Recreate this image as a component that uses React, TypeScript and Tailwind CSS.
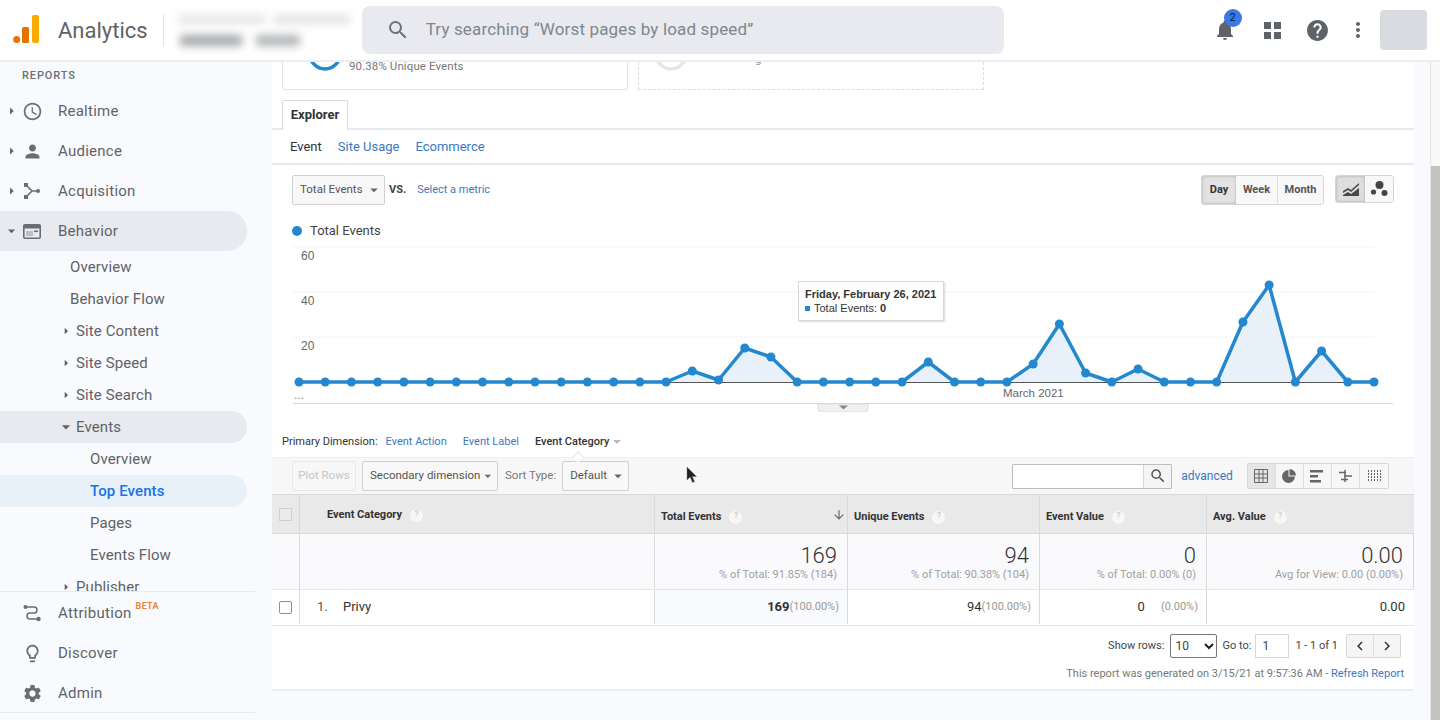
import React from "react";
import {
  MdArrowDownward,
  MdArrowDropDown,
  MdArrowRight,
  MdChevronLeft,
  MdChevronRight,
  MdHelp,
  MdMoreVert,
  MdNotifications,
  MdOutlineAccessTime,
  MdOutlineLightbulb,
  MdPerson,
  MdSearch,
  MdSettings,
} from "react-icons/md";

const values = [
  382, 382, 382, 382, 382, 382, 382, 382, 382, 382, 382, 382, 382, 382, 382, 371, 380, 348, 357, 382, 382, 382, 382,
  382, 362, 382, 382, 382, 364, 324, 373, 382, 369, 382, 382, 382, 322, 285, 382, 351, 382, 382,
];
const points = values.map((y, i) => [299 + i * 26.22, y]);
const linePath = points.map(([x, y]) => `${x},${y}`).join(" ");

const Help = () => (
  <span className="ml-2 inline-flex h-[13px] w-[13px] items-center justify-center rounded-full bg-[#f7f7f7] text-[9px] font-normal text-[#c4c4c4]">
    ?
  </span>
);

const Nav = ({ icon, label, open, active }: { icon: React.ReactNode; label: string; open?: boolean; active?: boolean }) => (
  <div className={`flex h-10 w-[247px] items-center rounded-r-[20px] pl-[3px] ${active ? "bg-[#e9eaef]" : ""}`}>
    <span className="flex w-[17px] justify-center text-[#5f6368]">
      {open ? <MdArrowDropDown size={20} /> : <MdArrowRight size={18} />}
    </span>
    <span className="flex w-6 justify-center text-[#6a6d71]">{icon}</span>
    <span className="ml-[14px] text-[15px] tracking-[0.25px] text-[#5f6368]">{label}</span>
  </div>
);

const Sub = ({ label, indent, arrow, open, pill }: { label: string; indent: string; arrow?: boolean; open?: boolean; pill?: string }) => (
  <div className={`flex h-8 w-[247px] items-center rounded-r-[16px] ${indent} ${pill ?? ""}`}>
    {arrow && (
      <span className="-ml-5 flex w-5 justify-center text-[#5f6368]">
        {open ? <MdArrowDropDown size={20} /> : <MdArrowRight size={16} />}
      </span>
    )}
    <span className={`text-[15px] tracking-[0.1px] ${pill === "bg-[#e8f1f7]" ? "font-medium text-[#1a73e8]" : "text-[#5f6368]"}`}>{label}</span>
  </div>
);

const Sidebar = () => (
  <aside className="flex h-[658px] w-[272px] shrink-0 flex-col bg-[#f9fafd]">
    <div className="flex-1 overflow-hidden">
      <div className="flex h-[29px] items-center pl-[22px] text-[11px] font-medium tracking-[0.9px] text-[#6b6e72]">REPORTS</div>
      <Nav label="Realtime" icon={<MdOutlineAccessTime size={21} />} />
      <Nav label="Audience" icon={<MdPerson size={21} />} />
      <Nav
        label="Acquisition"
        icon={
          <svg width="18" height="18" viewBox="0 0 18 18" fill="none" stroke="currentColor" strokeWidth="1.6">
            <path d="M3 3l6 6-6 6M9 9h6" />
            <rect x="1" y="1" width="4" height="4" fill="currentColor" stroke="none" />
            <rect x="1" y="13" width="4" height="4" fill="currentColor" stroke="none" />
            <circle cx="15" cy="9" r="2" fill="currentColor" stroke="none" />
          </svg>
        }
      />
      <Nav
        label="Behavior"
        open
        active
        icon={
          <svg width="18" height="15" viewBox="0 0 18 15" fill="none">
            <rect x="0.8" y="0.8" width="16.4" height="13.4" rx="1" stroke="currentColor" strokeWidth="1.6" />
            <rect x="1" y="1" width="16" height="3.5" fill="currentColor" />
            <rect x="3" y="7" width="7" height="5" fill="currentColor" opacity="0.35" />
            <rect x="11" y="6.5" width="4" height="1.6" fill="currentColor" />
          </svg>
        }
      />
      <Sub label="Overview" indent="pl-[70px]" />
      <Sub label="Behavior Flow" indent="pl-[70px]" />
      <Sub label="Site Content" indent="pl-[76px]" arrow />
      <Sub label="Site Speed" indent="pl-[76px]" arrow />
      <Sub label="Site Search" indent="pl-[76px]" arrow />
      <Sub label="Events" indent="pl-[76px]" arrow open pill="bg-[#e9eaef]" />
      <Sub label="Overview" indent="pl-[90px]" />
      <Sub label="Top Events" indent="pl-[90px]" pill="bg-[#e8f1f7]" />
      <Sub label="Pages" indent="pl-[90px]" />
      <Sub label="Events Flow" indent="pl-[90px]" />
      <Sub label="Publisher" indent="pl-[76px]" arrow />
    </div>
    <div className="h-[122px] w-[255px] border-y border-[#e9eaee] pt-px">
      <div className="flex h-10 items-center pl-5 text-[#6a6d71]">
        <span className="flex w-6 justify-center">
          <svg width="18" height="18" viewBox="0 0 18 18" fill="none" stroke="currentColor" strokeWidth="1.5">
            <circle cx="2.5" cy="3" r="2" fill="currentColor" stroke="none" />
            <circle cx="15.500" cy="15" r="2.200" fill="currentColor" stroke="none" />
            <path d="M4 3h7a3 3 0 0 1 0 6H7a3 3 0 0 0 0 6h7" />
          </svg>
        </span>
        <span className="ml-[14px] text-[15px] tracking-[0.3px] text-[#5f6368]">Attribution</span>
        <span className="-mt-3 ml-1 text-[9px] font-bold tracking-[0.3px] text-[#e8873a]">BETA</span>
      </div>
      <div className="flex h-10 items-center pl-5 text-[#6a6d71]">
        <span className="flex w-6 justify-center">
          <MdOutlineLightbulb size={21} />
        </span>
        <span className="ml-[14px] text-[15px] tracking-[0.25px] text-[#5f6368]">Discover</span>
      </div>
      <div className="flex h-10 items-center pl-5 text-[#6a6d71]">
        <span className="flex w-6 justify-center">
          <MdSettings size={21} />
        </span>
        <span className="ml-[14px] text-[15px] tracking-[0.25px] text-[#5f6368]">Admin</span>
      </div>
    </div>
    <div className="h-[7px]" />
  </aside>
);

const Header = () => (
  <header className="flex h-[62px] shrink-0 items-center border-b-2 border-[#eceef1] bg-white">
    <svg className="ml-[13px] shrink-0" width="26" height="30" viewBox="0 0 26 30">
      <circle cx="3.7" cy="24.5" r="3.5" fill="#e8710a" />
      <rect x="9" y="12" width="7" height="16" rx="1.5" fill="#e37400" />
      <rect x="19" y="0" width="7" height="28" rx="2" fill="#f9ab00" />
    </svg>
    <span className="ml-[19px] text-[22px] text-[#5f6368]">Analytics</span>
    <div className="ml-[15px] h-8 w-px bg-[#e3e4e7]" />
    <div className="ml-[14px] flex h-[44px] w-[172px] shrink-0 flex-col justify-center gap-[11px] blur-[4px]">
      <div className="flex gap-2">
        <div className="h-[9px] w-[88px] bg-[#e6e6e8]" />
        <div className="h-[9px] w-[76px] bg-[#e2e2e4]" />
      </div>
      <div className="flex gap-[14px] pl-[2px]">
        <div className="h-[11px] w-[62px] bg-[#a5a7aa]" />
        <div className="h-[11px] w-[44px] bg-[#b2b4b6]" />
      </div>
    </div>
    <div className="ml-[12px] flex h-[48px] w-[642px] shrink-0 items-center rounded-lg bg-[#e8eaf0] pl-6 text-[#6f7276]">
      <MdSearch size={24} />
      <span className="ml-4 text-[17px] tracking-[0.15px] text-[#80868b]">Try searching “Worst pages by load speed”</span>
    </div>
    <div className="relative ml-[209px] w-6 text-[#5f6368]">
      <MdNotifications size={24} />
      <span className="absolute -top-[9px] left-[11px] flex h-[18px] w-[18px] items-center justify-center rounded-full bg-[#3b78e7] text-[11px] text-[#0d1b33]">2</span>
    </div>
    <span className="ml-[24px] flex w-6 justify-center text-[#5f6368]">
      <svg width="17" height="17" viewBox="0 0 17 17" fill="currentColor">
        <rect width="7" height="7" />
        <rect x="10" width="7" height="7" />
        <rect y="10" width="7" height="7" />
        <rect x="10" y="10" width="7" height="7" />
      </svg>
    </span>
    <span className="ml-[20px] text-[#5f6368]">
      <MdHelp size={25} />
    </span>
    <span className="ml-[16px] text-[#5f6368]">
      <MdMoreVert size={24} />
    </span>
    <div className="ml-[10px] h-10 w-[47px] rounded bg-[#d8dbe0]" />
  </header>
);

const Select = ({ label, className }: { label: string; className: string }) => (
  <div className={`flex items-center justify-between whitespace-nowrap rounded-[2px] border border-[#d0d0d0] bg-[#f8f8f8] pr-px pl-[7px] text-[11.5px] text-[#555] ${className}`}>
    {label}
    <MdArrowDropDown size={18} className="text-[#666]" />
  </div>
);

const Chart = () => (
  <div className="relative h-[172px] font-['Liberation_Sans',sans-serif]">
    <svg width="1142" height="172" viewBox="272 240 1142 172" className="block">
      {[247, 292, 337].map((y) => (
        <line key={y} x1="292" x2="1374" y1={y} y2={y} stroke="#f3f4f6" />
      ))}
      <text x="301" y="260" fontSize="12" fill="#666">60</text>
      <text x="301" y="305" fontSize="12" fill="#666">40</text>
      <text x="301" y="350" fontSize="12" fill="#666">20</text>
      <text x="294" y="399" fontSize="12" fill="#888">...</text>
      <text x="1003" y="397" fontSize="11.5" fill="#666">March 2021</text>
      <polygon points={`299,382 ${linePath} 1374,382`} fill="#e8f1fa" />
      <line x1="299" x2="1374" y1="382.5" y2="382.5" stroke="#555" />
      <line x1="293" x2="1393" y1="403.5" y2="403.5" stroke="#d8d8d8" />
      <polyline points={linePath} fill="none" stroke="#2388cf" strokeWidth="3.5" strokeLinejoin="round" />
      {points.map(([x, y]) => (
        <circle key={x} cx={x} cy={y} r="4.5" fill="#2388cf" />
      ))}
      <path d="M818 404h50v5a3 3 0 0 1-3 3h-44a3 3 0 0 1-3-3z" fill="#f0f0f0" stroke="#dddddd" />
      <path d="M839 405.500h9l-4.500 4z" fill="#888" />
    </svg>
    <div className="absolute top-[41px] left-[526px] h-[40px] w-[146px] border border-[#d8d8d8] bg-white px-[6px] pt-[5px] text-[11px] leading-[14px] text-[#333] shadow-[1px_1px_2px_rgba(0,0,0,0.15)]">
      <div className="font-bold">Friday, February 26, 2021</div>
      <div className="flex items-center">
        <span className="mr-[4px] h-[5px] w-[5px] bg-[#2388cf]" />
        Total Events:&nbsp;<b>0</b>
      </div>
    </div>
  </div>
);

const tableGrid = "grid grid-cols-[28px_355px_193px_192px_167px_207px]";
const cellLine = "border-r border-[#d9d9d9]";

const Th = ({ label, sort }: { label: string; sort?: boolean }) => (
  <div className={`flex items-center pt-[6px] pl-[6px] text-[11px] font-bold text-[#333] ${cellLine} last:border-r-0`}>
    {label}
    <Help />
    {sort && <MdArrowDownward size={14} className="mr-[1px] -mt-1 ml-auto text-[#666]" />}
  </div>
);

const Total = ({ value, note }: { value: string; note: string }) => (
  <div className={`bg-[#fafafc] pt-[10px] pr-[10px] text-right ${cellLine}`}>
    <div className="text-[22px] leading-[24px] font-light text-[#333]">{value}</div>
    <div className="text-[11px] leading-[13px] text-[#a0a0a0]">{note}</div>
  </div>
);

const Main = () => (
  <main className="flex w-[1142px] shrink-0 flex-col bg-[#f9fafd] font-['Roboto',sans-serif]">
    <div className="flex h-[629px] flex-col border-b-2 border-[#eceef1] bg-white">
      <div className="flex h-7 shrink-0 gap-[10px] pl-[10px]">
        <div className="flex w-[346px] overflow-hidden rounded-b-[3px] border-x border-b border-[#e4e4e4]">
          <svg className="-mt-[10px] ml-[25px] shrink-0" width="34" height="26" viewBox="0 0 34 26">
            <path d="M2 2a15 15 0 0 0 30 0" fill="none" stroke="#2388cf" strokeWidth="3.5" />
          </svg>
          <span className="mt-[-4px] ml-[7px] text-[11.5px] tracking-[0.1px] text-[#777]">90.38% Unique Events</span>
        </div>
        <div className="flex w-[346px] overflow-hidden border-x border-b border-dashed border-[#dddddd]">
          <svg className="-mt-[10px] ml-[15px] shrink-0" width="34" height="26" viewBox="0 0 34 26">
            <path d="M2 2a15 15 0 0 0 30 0" fill="none" stroke="#e6e6e6" strokeWidth="3.5" />
          </svg>
          <span className="-mt-[11px] ml-[67px] text-[11.5px] text-[#999]">g</span>
        </div>
      </div>
      <div className="mt-[10px] h-[30px] shrink-0 border-b-2 border-[#e8e9ec] pl-[10px]">
        <div className="flex h-[30px] w-[66px] items-center justify-center rounded-t-[2px] border-x border-t border-[#d8d8d8] bg-white pb-[2px] text-[13px] font-bold text-[#333]">Explorer</div>
      </div>
      <div className="flex h-[35px] shrink-0 items-center gap-4 border-b-2 border-[#e8e9ec] pl-[18px] text-[13px]">
        <span className="text-[#333]">Event</span>
        <span className="text-[#3b78c4]">Site Usage</span>
        <span className="text-[#3b78c4]">Ecommerce</span>
      </div>
      <div className="mt-[10px] flex h-[30px] shrink-0 items-center pl-5">
        <Select label="Total Events" className="h-[30px] w-[93px]" />
        <span className="ml-[4px] text-[11px] font-bold text-[#444]">VS.</span>
        <span className="ml-[11px] text-[11px] text-[#3b78c4]">Select a metric</span>
        <div className="ml-auto flex h-[30px] overflow-hidden rounded-[3px] border border-[#d6d6d6] text-[11px] font-bold text-[#555]">
          <span className="flex w-[34px] items-center justify-center bg-[#e2e2e2] text-[#333] shadow-[inset_0_0_3px_rgba(0,0,0,0.25)]">Day</span>
          <span className="flex w-[42px] items-center justify-center border-r border-[#dedede] bg-[#f8f8f8]">Week</span>
          <span className="flex w-[45px] items-center justify-center bg-[#f8f8f8]">Month</span>
        </div>
        <div className="mr-5 ml-[11px] flex h-[28px] self-start overflow-hidden rounded-[3px] border border-[#d6d6d6]">
          <span className="flex w-[29px] items-center justify-center bg-[#dedede] shadow-[inset_0_0_3px_rgba(0,0,0,0.25)]">
            <svg width="18" height="15" viewBox="0 0 18 15" fill="#4a4a4a">
              <path d="M1 9l5-3 3 2 8-7v2L9 10 6 8l-5 3zM1 13l5-3 3 2 8-6v8H1z" />
            </svg>
          </span>
          <span className="flex w-[28px] items-center justify-center bg-[#f8f8f8]">
            <svg width="18" height="18" viewBox="0 0 18 18" fill="#444">
              <circle cx="9.500" cy="5" r="4" />
              <circle cx="3.500" cy="12" r="2.600" />
              <circle cx="14.500" cy="13" r="3" />
            </svg>
          </span>
        </div>
      </div>
      <div className="mt-4 flex h-[19px] shrink-0 items-center pl-5 text-[13px] text-[#444]">
        <span className="mr-2 h-[10px] w-[10px] rounded-full bg-[#2388cf]" />
        Total Events
      </div>
      <Chart />
      <div className="relative h-[45px] shrink-0 pt-[21px] pl-[10px] text-[11px] leading-[18px]">
        <span className="text-[#333]">Primary Dimension:</span>
        <span className="ml-2 text-[#3b78c4]">Event Action</span>
        <span className="ml-[16px] text-[#3b78c4]">Event Label</span>
        <span className="ml-[16px] font-medium text-[#333]">Event Category</span>
        <span className="ml-1 inline-block border-x-[4px] border-t-[4px] border-x-transparent border-t-[#bbb] align-middle" />
        <span className="absolute bottom-[-4px] left-[302px] h-2 w-2 rotate-45 border-t border-l border-[#e4e4e4] bg-white" />
      </div>
      <div className="flex h-[37px] shrink-0 items-center border-t border-[#efefef] bg-[#f7f7f7] pl-5">
        <span className="flex h-[30px] w-[64px] items-center justify-center rounded-[2px] border border-[#e8e8e8] text-[11.5px] text-[#c6c6c6]">Plot Rows</span>
        <Select label="Secondary dimension" className="ml-[6px] h-[30px] w-[136px]" />
        <span className="ml-[7px] text-[11.5px] text-[#777]">Sort Type:</span>
        <Select label="Default" className="ml-[6px] h-[30px] w-[67px]" />
        <div className="ml-[383px] flex h-[25px] w-[160px] overflow-hidden rounded-[1px] border border-[#bdbdbd] bg-white">
          <span className="flex-1" />
          <span className="flex w-7 items-center justify-center border-l border-[#d8d8d8] bg-[#f5f5f5] text-[#555]">
            <MdSearch size={18} />
          </span>
        </div>
        <span className="ml-[9px] text-[12px] text-[#3b78c4]">advanced</span>
        <div className="ml-[14px] flex h-[26px] overflow-hidden rounded-[2px] border border-[#d6d6d6] text-[#666]">
          <span className="flex w-7 items-center justify-center border-r border-[#dedede] bg-[#e6e6e6]">
            <svg width="14" height="14" viewBox="0 0 14 14" fill="none" stroke="currentColor">
              <path d="M.5.5h13v13H.5zM.5 5h13M.5 9h13M5 .5v13M9 .5v13" />
            </svg>
          </span>
          <span className="flex w-7 items-center justify-center border-r border-[#dedede] bg-[#f7f7f7]">
            <svg width="14" height="14" viewBox="0 0 14 14" fill="currentColor">
              <path d="M7.500 0A6.500 6.500 0 0 1 14 6.500H7.500zM6.500 1v6.500H13A6.500 6.500 0 1 1 6.500 1z" />
            </svg>
          </span>
          <span className="flex w-7 items-center justify-center border-r border-[#dedede] bg-[#f7f7f7]">
            <svg width="14" height="14" viewBox="0 0 14 14" fill="currentColor">
              <path d="M0 1h13v2.500H0zM0 6h8v2.500H0zM0 11h11v2.500H0z" />
            </svg>
          </span>
          <span className="flex w-7 items-center justify-center border-r border-[#dedede] bg-[#f7f7f7]">
            <svg width="14" height="14" viewBox="0 0 14 14" fill="none" stroke="currentColor" strokeWidth="1.5">
              <path d="M1 3.500h7M6 7h8M3 10.500h7M7 1v12" />
            </svg>
          </span>
          <span className="flex w-7 items-center justify-center bg-[#f7f7f7]">
            <svg width="14" height="14" viewBox="0 0 14 14" fill="none" stroke="currentColor">
              <path d="M1.500 1v12M4.500 1v12M7.500 1v12M10.500 1v12M13.500 1v12" strokeDasharray="2 1" />
            </svg>
          </span>
        </div>
      </div>
      <div className={`${tableGrid} h-10 shrink-0 border-y border-[#d9d9d9] bg-[#e9e9ea]`}>
        <div className={`flex items-center justify-center ${cellLine}`}>
          <span className="h-[13px] w-[13px] border border-[#cfcfcf] bg-[#ececec]" />
        </div>
        <div className={`flex items-center pt-[2px] pl-[27px] text-[11px] font-bold text-[#333] ${cellLine}`}>
          Event Category
          <Help />
        </div>
        <Th label="Total Events" sort />
        <Th label="Unique Events" />
        <Th label="Event Value" />
        <Th label="Avg. Value" />
      </div>
      <div className={`${tableGrid} h-[56px] shrink-0 border-b border-[#e4e4e4]`}>
        <div className={`bg-[#fafafc] ${cellLine}`} />
        <div className={`bg-[#fafafc] ${cellLine}`} />
        <Total value="169" note="% of Total: 91.85% (184)" />
        <Total value="94" note="% of Total: 90.38% (104)" />
        <Total value="0" note="% of Total: 0.00% (0)" />
        <Total value="0.00" note="Avg for View: 0.00 (0.00%)" />
      </div>
      <div className={`${tableGrid} h-[36px] shrink-0 border-b border-[#e4e4e4] pb-px text-[13px] text-[#333]`}>
        <div className={`flex items-center justify-center ${cellLine}`}>
          <span className="h-[13px] w-[13px] rounded-[2px] border border-[#8f8f8f] bg-white" />
        </div>
        <div className={`flex items-center pl-[17px] ${cellLine}`}>
          <span className="w-[26px] text-[#555]">1.</span>Privy
        </div>
        <div className={`flex items-center justify-end bg-[#f9fafd] pr-2 ${cellLine}`}>
          <b className="font-bold">169</b>
          <span className="text-[11px] text-[#999]">(100.00%)</span>
        </div>
        <div className={`flex items-center justify-end pr-2 ${cellLine}`}>
          94<span className="text-[11px] text-[#999]">(100.00%)</span>
        </div>
        <div className={`flex items-center justify-end pr-2 ${cellLine}`}>
          0<span className="ml-4 text-[11px] text-[#999]">(0.00%)</span>
        </div>
        <div className="flex items-center justify-end pr-[9px]">0.00</div>
      </div>
      <div className="flex shrink-0 items-center justify-end pt-2 pr-[13px] text-[11px] text-[#444]">
        Show rows:
        <span className="ml-[6px] flex h-[24px] w-[47px] items-center justify-between rounded-[2px] border border-[#777] bg-white pl-[4px] text-[12px]">
          10
          <svg width="10" height="7" viewBox="0 0 10 7" className="mr-[2px]" fill="none" stroke="#222" strokeWidth="2">
            <path d="M1 1l4 4 4-4" />
          </svg>
        </span>
        <span className="ml-[5px]">Go to:</span>
        <span className="ml-[4px] flex h-[24px] w-[34px] items-center border border-[#d8d8d8] bg-white pl-[6px] text-[12px]">1</span>
        <span className="ml-[6px]">1 - 1 of 1</span>
        <div className="ml-2 flex h-[24px] w-[55px] overflow-hidden rounded-[2px] border border-[#d6d6d6] bg-[#f5f5f5] text-[#333]">
          <span className="flex flex-1 items-center justify-center border-r border-[#dedede]">
            <MdChevronLeft size={18} />
          </span>
          <span className="flex flex-1 items-center justify-center">
            <MdChevronRight size={18} />
          </span>
        </div>
      </div>
      <div className="mt-2 pr-[10px] text-right text-[11px] text-[#777]">
        This report was generated on 3/15/21 at 9:57:36 AM - <span className="text-[#3b78c4]">Refresh Report</span>
      </div>
    </div>
  </main>
);

export default function App() {
  return (
    <div className="relative flex h-[720px] w-[1440px] flex-col overflow-hidden bg-[#f9fafd] font-['Roboto',sans-serif]">
      <Header />
      <div className="flex flex-1">
        <Sidebar />
        <Main />
        <div className="w-4 shrink-0" />
        <div className="flex w-[10px] shrink-0 flex-col border-l border-[#e6e6e6] bg-[#f9f9f9]">
          <div className="h-[104px]" />
          <div className="flex-1 bg-[#c3c3c1]" />
        </div>
      </div>
      <svg className="absolute top-[466px] left-[686px]" width="12" height="18" viewBox="0 0 12 18">
        <path d="M1 1v13l3.200-3 2.300 5.500 2-1L6.300 10.500H10.500z" fill="#222" stroke="#777" strokeWidth="0.5" />
      </svg>
    </div>
  );
}
